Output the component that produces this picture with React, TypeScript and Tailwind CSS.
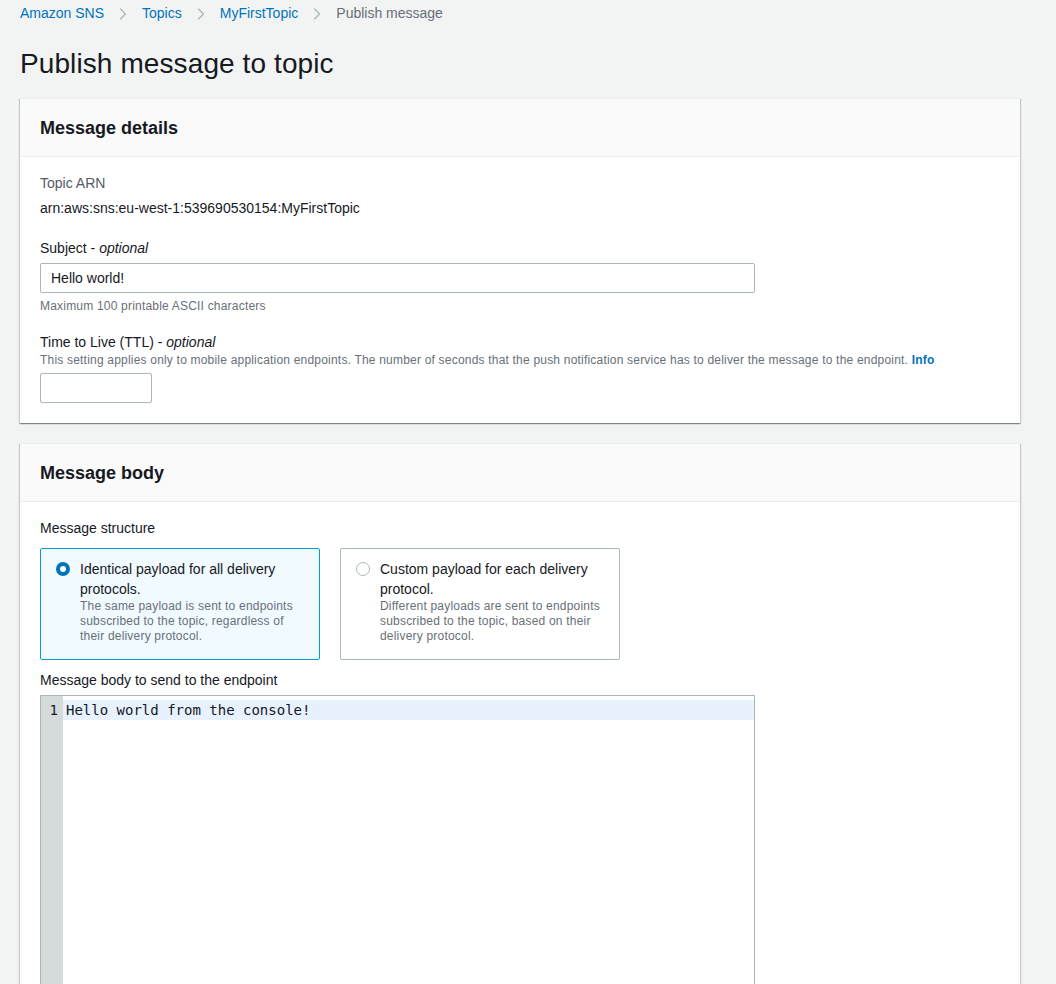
import { ChevronRight } from 'lucide-react'

const crumbs = ['Amazon SNS', 'Topics', 'MyFirstTopic']

function Card({ title, children }: { title: string; children: React.ReactNode }) {
  return (
    <section className="bg-white border-t border-[#eaeded] shadow-[0_1px_1px_0_rgba(0,28,36,0.3),1px_1px_1px_0_rgba(0,28,36,0.15),-1px_1px_1px_0_rgba(0,28,36,0.15)]">
      <div className="h-[58px] flex items-center px-5 pt-[2px] bg-[#fafafa] border-b border-[#eaeded]">
        <h2 className="text-[18px] font-bold text-[#16191f]">{title}</h2>
      </div>
      {children}
    </section>
  )
}

function Tile({
  selected,
  title,
  desc,
}: {
  selected: boolean
  title: string
  desc: string
}) {
  return (
    <div
      className={
        selected
          ? 'w-[280px] h-[112px] rounded-[2px] border border-[#00a1c9] bg-[#f1faff] flex gap-[10px] pl-[15px] pr-4 pt-[10px]'
          : 'w-[280px] h-[112px] rounded-[2px] border border-[#aab7b8] bg-white flex gap-[10px] pl-[15px] pr-4 pt-[10px]'
      }
    >
      <span
        className={
          selected
            ? 'mt-[3px] w-[14px] h-[14px] shrink-0 rounded-full border-[4px] border-[#0073bb] bg-white'
            : 'mt-[3px] w-[14px] h-[14px] shrink-0 rounded-full border border-[#aab7b8] bg-white'
        }
      />
      <div>
        <div className="text-[14px] leading-[20px] text-[#16191f]">{title}</div>
        <div className="text-[12px] leading-[15px] tracking-[0.2px] text-[#687078]">{desc}</div>
      </div>
    </div>
  )
}

export default function App() {
  return (
    <div
      className="min-h-screen bg-[#f2f3f3] pl-5 pr-9 pb-10"
      style={{ fontFamily: '"Liberation Sans", Arial, sans-serif' }}
    >
      <nav className="h-[27px] flex items-center text-[14px]">
        {crumbs.map((c) => (
          <span key={c} className="flex items-center">
            <span className="text-[#0073bb]">{c}</span>
            <ChevronRight className="mx-[9px] text-[#aab7b8]" size={20} strokeWidth={1.5} />
          </span>
        ))}
        <span className="text-[#687078]">Publish message</span>
      </nav>

      <h1 className="mt-[19px] mb-[16px] text-[28px] leading-[36px] tracking-[0.1px] text-[#16191f]">
        Publish message to topic
      </h1>

      <div className="flex flex-col gap-5">
        <Card title="Message details">
          <div className="px-5 pt-[15px] pb-5 text-[14px] text-[#16191f]">
            <div className="leading-[22px] text-[#545b64]">Topic ARN</div>
            <div className="mt-[3px] leading-[22px]">arn:aws:sns:eu-west-1:539690530154:MyFirstTopic</div>

            <div className="mt-[18px] leading-[22px]">
              Subject - <i>optional</i>
            </div>
            <div className="mt-[4px] w-[715px] h-[30px] border border-[#aab7b8] rounded-[2px] flex items-center px-[10px]">
              Hello world!
            </div>
            <div className="mt-[4px] text-[12px] leading-[18px] tracking-[0.2px] text-[#687078]">
              Maximum 100 printable ASCII characters
            </div>

            <div className="mt-[16px] leading-[22px]">
              Time to Live (TTL) - <i>optional</i>
            </div>
            <div className="text-[12px] leading-[15px] tracking-[0.2px] text-[#687078]">
              This setting applies only to mobile application endpoints. The number of seconds that the push
              notification service has to deliver the message to the endpoint.{' '}
              <span className="font-bold text-[#0073bb]">Info</span>
            </div>
            <div className="mt-[5px] w-[112px] h-[30px] border border-[#aab7b8] rounded-[2px]" />
          </div>
        </Card>

        <Card title="Message body">
          <div className="px-5 pt-[15px] pb-5 text-[14px] text-[#16191f]">
            <div className="leading-[22px]">Message structure</div>
            <div className="mt-[9px] flex gap-5">
              <Tile
                selected
                title="Identical payload for all delivery protocols."
                desc="The same payload is sent to endpoints subscribed to the topic, regardless of their delivery protocol."
              />
              <Tile
                selected={false}
                title="Custom payload for each delivery protocol."
                desc="Different payloads are sent to endpoints subscribed to the topic, based on their delivery protocol."
              />
            </div>

            <div className="mt-[9px] leading-[22px]">Message body to send to the endpoint</div>
            <div className="mt-[4px] w-[715px] h-[400px] border border-[#aab7b8] flex">
              <div className="w-[22px] bg-[#d5dbdb] pt-[4px] text-right pr-[5px] font-['DejaVu_Sans_Mono',monospace] text-[14px] leading-[20px] text-[#16191f]">
                1
              </div>
              <div className="flex-1 pt-[4px]">
                <div className="h-[20px] bg-[#e8f2fe] pl-[3px] font-['DejaVu_Sans_Mono',monospace] text-[14px] leading-[20px] text-[#16191f]">
                  Hello world from the console!
                </div>
              </div>
            </div>
          </div>
        </Card>
      </div>
    </div>
  )
}
